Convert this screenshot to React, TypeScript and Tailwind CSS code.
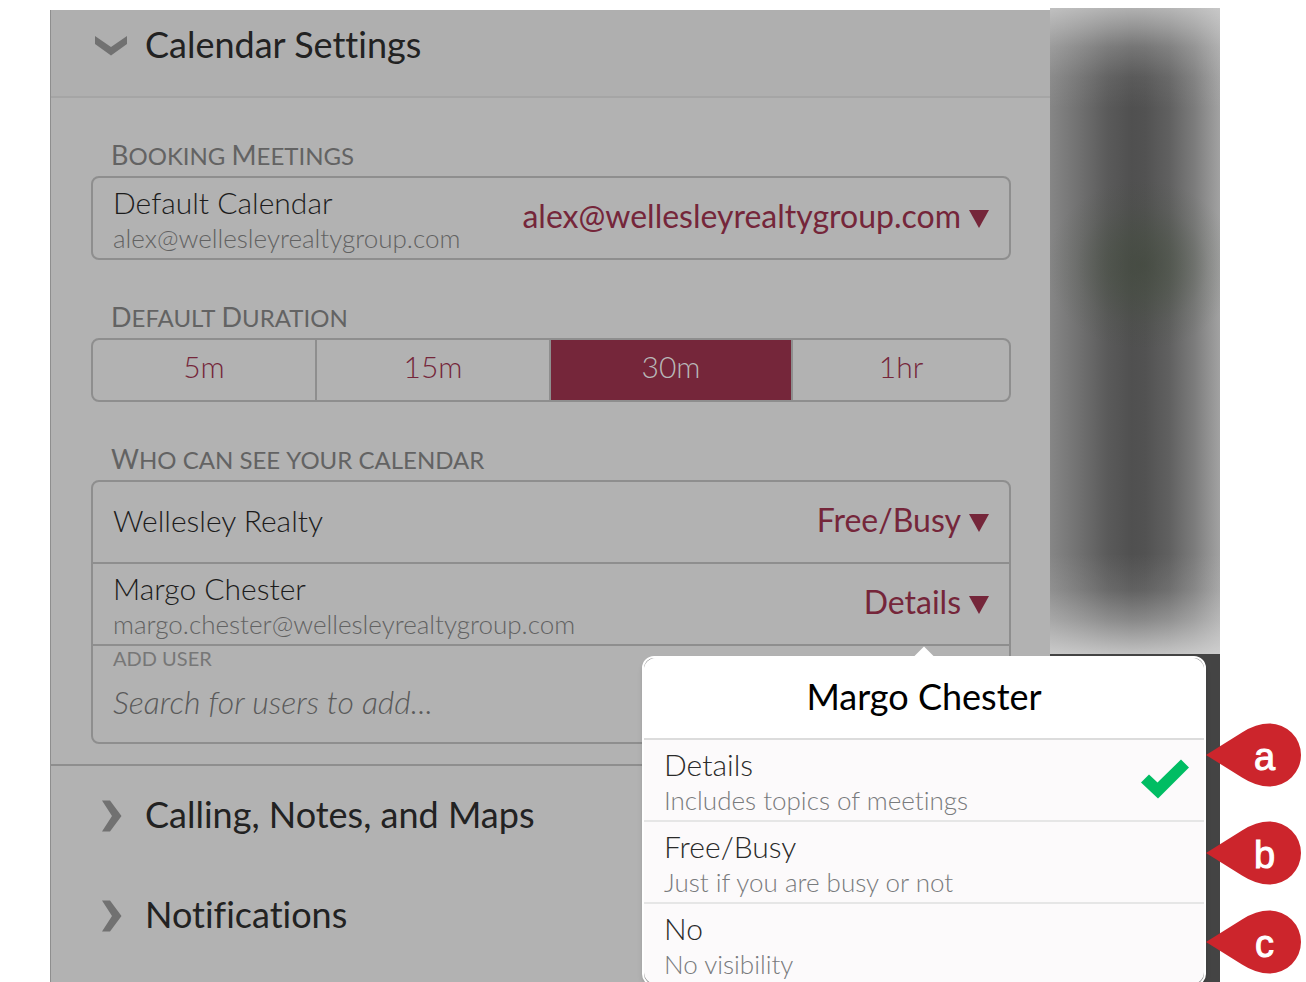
import { useState } from 'react';

const durations = ['5m', '15m', '30m', '1hr'];

const visibilityOptions = [
  { name: 'Details', note: 'Includes topics of meetings' },
  { name: 'Free/Busy', note: 'Just if you are busy or not' },
  { name: 'No', note: 'No visibility' },
];

const visibilityNames = visibilityOptions.map((option) => option.name);

const calendars = ['alex@wellesleyrealtygroup.com'];

const markers = [
  { letter: 'a', place: 'top-[65px]' },
  { letter: 'b', place: 'top-[163px]' },
  { letter: 'c', place: 'top-[252px]' },
];

function ChevronDown() {
  return (
    <svg viewBox="0 0 32 20" className="mt-0.5 w-8 h-5 shrink-0 fill-[#717171]" aria-hidden="true">
      <path d="M0 0 L16 11 L32 0 V8 L16 19.5 L0 8 Z" />
    </svg>
  );
}

function ChevronRight() {
  return (
    <svg viewBox="0 0 32 32" className="w-8 h-8 shrink-0 fill-[#717171]" aria-hidden="true">
      <path d="M7 0.5 H15 L26.5 16 L15 31.5 H7 L17 16 Z" />
    </svg>
  );
}

type DropdownProps = {
  label: string;
  options: string[];
  value: string;
  onChange: (value: string) => void;
};

function Dropdown({ label, options, value, onChange }: DropdownProps) {
  return (
    <div className="flex items-center gap-2 text-[#75263a]">
      <select
        aria-label={label}
        value={value}
        onChange={(e) => onChange(e.target.value)}
        className="appearance-none [field-sizing:content] bg-transparent pb-1 text-[32px] leading-10 cursor-pointer outline-none"
      >
        {options.map((option) => (
          <option key={option}>{option}</option>
        ))}
      </select>
      <svg viewBox="0 0 20 18" className="mt-0.5 w-5 h-[18px] fill-current pointer-events-none" aria-hidden="true">
        <path d="M0 0 H20 L10 18 Z" />
      </svg>
    </div>
  );
}

// All caps, with a taller first letter on the words that are capitalised
function SectionLabel({ text }: { text: string }) {
  return (
    <h3 className="px-5 text-[24px] leading-9 text-[#636363]">
      {text.split(' ').map((word) => (
        <span key={word}>
          <span
            className={
              /^[A-Z]/.test(word)
                ? 'inline-block uppercase first-letter:text-[27px] first-letter:leading-none'
                : 'inline-block uppercase'
            }
          >
            {word}
          </span>{' '}
        </span>
      ))}
    </h3>
  );
}

function Person({ name, email }: { name: string; email?: string }) {
  return (
    <div className={email ? 'pt-1' : 'pb-1'}>
      <div className="text-[30px] leading-9 font-light text-[#1c1c1c]">{name}</div>
      {email && <div className="text-[26px] leading-9 font-light text-[#626262]">{email}</div>}
    </div>
  );
}

function Marker({ letter }: { letter: string }) {
  return (
    <div className="relative w-[95px] h-16">
      <svg viewBox="0 0 95 64" className="w-full h-full fill-[#cc252c]" aria-hidden="true">
        <path d="M0 32 L36 9.5 Q50 0.5 63.5 0.5 A31.5 31.5 0 0 1 63.5 63.5 Q50 63.5 36 54.5 Z" />
      </svg>
      <span className="absolute inset-0 pl-[22px] pt-1 flex items-center justify-center font-['Liberation_Sans',sans-serif] text-[38px] leading-none text-white [-webkit-text-stroke:1px_white]">
        {letter}
      </span>
    </div>
  );
}

type PopoverProps = {
  title: string;
  value: string;
  onChange: (value: string) => void;
};

function VisibilityPopover({ title, value, onChange }: PopoverProps) {
  return (
    <div
      role="dialog"
      aria-label={title}
      className="absolute z-10 top-full -right-[197px] mt-3 w-[564px] rounded-xl border-2 border-white bg-[#8a8a8a] shadow-md"
    >
      <svg viewBox="0 0 20 10" className="absolute left-[270px] -top-3 w-5 h-[11px] fill-white" aria-hidden="true">
        <path d="M0 10 L10 0 L20 10 Z" />
      </svg>
      <div className="overflow-hidden rounded-xl bg-[#fcfafb]">
        <h2 className="bg-white pt-[18px] pb-[22px] text-center text-[36px] leading-10 text-black">{title}</h2>
        {visibilityOptions.map((option, index) => (
          <label
            key={option.name}
            className={`flex items-center justify-between h-[82px] pl-5 pr-[15px] border-t-2 cursor-pointer ${
              index === 0 ? 'border-[#dcdcdc]' : 'border-[#e6e6e6]'
            }`}
          >
            <input
              type="radio"
              name="visibility"
              className="sr-only"
              checked={value === option.name}
              onChange={() => onChange(option.name)}
            />
            <span className="pt-1 font-light">
              <span className="block text-[30px] leading-9 text-[#2a2a2a]">{option.name}</span>
              <span className="block text-[26px] leading-9 text-[#797b7d]">{option.note}</span>
            </span>
            {value === option.name && (
              <svg viewBox="0 0 48 40" className="mb-0.5 w-12 h-10 fill-[#00bd63]" aria-hidden="true">
                <path d="M0 23.5 L8 15.5 L16.5 23.5 L40 0.5 L48 8.5 L17 39.5 Z" />
              </svg>
            )}
          </label>
        ))}
      </div>
      {markers.map((marker) => (
        <div key={marker.letter} className={`absolute left-full ml-0.5 ${marker.place}`}>
          <Marker letter={marker.letter} />
        </div>
      ))}
    </div>
  );
}

export default function App() {
  const [calendar, setCalendar] = useState(calendars[0]);
  const [duration, setDuration] = useState('30m');
  const [companyAccess, setCompanyAccess] = useState('Free/Busy');
  const [margoAccess, setMargoAccess] = useState('Details');

  return (
    <div className="flex h-screen overflow-hidden bg-white pt-2 pl-[50px] pr-[86px] font-[Lato,sans-serif] [font-variant-ligatures:none]">
      <main className="flex-1 mt-0.5 border-l border-[#8e8e8e] bg-[#b2b2b2]">
        <h2 className="border-b-2 border-[#a5a5a5] bg-[#afafaf]">
          <button type="button" aria-expanded="true" className="flex w-full h-[86px] items-center gap-[18px] pl-11 pb-4 text-[36px] text-[#222]">
            <ChevronDown />
            <span className="pb-0.5">Calendar Settings</span>
          </button>
        </h2>

        <div className="border-b-2 border-[#8e8e8e] pl-10 pr-[39px] pt-10 pb-5">
          <section>
            <SectionLabel text="Booking Meetings" />
            <div className="mt-0.5 flex h-[84px] items-center justify-between rounded-lg border-2 border-[#8e8e8e] px-5">
              <Person name="Default Calendar" email="alex@wellesleyrealtygroup.com" />
              <Dropdown label="Default Calendar" options={calendars} value={calendar} onChange={setCalendar} />
            </div>
          </section>

          <section className="mt-10">
            <SectionLabel text="Default Duration" />
            <div
              role="radiogroup"
              aria-label="Default Duration"
              className="mt-0.5 grid h-16 grid-cols-[224fr_234fr_242fr_216fr] divide-x-2 divide-[#8e8e8e] overflow-hidden rounded-lg border-2 border-[#8e8e8e]"
            >
              {durations.map((item) => (
                <label
                  key={item}
                  className={`relative flex items-center justify-center pb-2 text-[30px] font-light cursor-pointer ${
                    duration === item ? 'bg-[#75263a] text-[#b8b8b8]' : 'text-[#75263a]'
                  }`}
                >
                  <input
                    type="radio"
                    name="duration"
                    className="sr-only"
                    checked={duration === item}
                    onChange={() => setDuration(item)}
                  />
                  {item}
                </label>
              ))}
            </div>
          </section>

          <section className="mt-10">
            <SectionLabel text="Who can see your calendar" />
            <div className="mt-0.5 divide-y-2 divide-[#8e8e8e] rounded-lg border-2 border-[#8e8e8e]">
              <div className="flex h-[82px] items-center justify-between px-5">
                <Person name="Wellesley Realty" />
                <Dropdown
                  label="Wellesley Realty"
                  options={visibilityNames}
                  value={companyAccess}
                  onChange={setCompanyAccess}
                />
              </div>
              <div className="relative flex h-[82px] items-center justify-between px-5">
                <Person name="Margo Chester" email="margo.chester@wellesleyrealtygroup.com" />
                <Dropdown
                  label="Margo Chester"
                  options={visibilityNames}
                  value={margoAccess}
                  onChange={setMargoAccess}
                />
                <VisibilityPopover title="Margo Chester" value={margoAccess} onChange={setMargoAccess} />
              </div>
              <div className="h-24 px-5">
                <label htmlFor="add-user" className="block text-xl leading-6 uppercase text-[#777]">
                  Add user
                </label>
                <input
                  id="add-user"
                  type="text"
                  placeholder="Search for users to add..."
                  className="mt-3 w-full bg-transparent text-[32px] leading-10 font-light italic text-[#222] placeholder:text-[#5a5a5a] outline-none"
                />
              </div>
            </div>
          </section>
        </div>

        {['Calling, Notes, and Maps', 'Notifications'].map((title) => (
          <h2 key={title}>
            <button type="button" aria-expanded="false" className="flex w-full h-[100px] items-center gap-[18px] pl-11 text-[36px] text-[#222]">
              <ChevronRight />
              <span className="pb-1">{title}</span>
            </button>
          </h2>
        ))}
      </main>

      <aside className="flex w-[170px] shrink-0 flex-col bg-[#444]">
        <div className="relative h-[646px] bg-[linear-gradient(90deg,#868686,#7a7a7a_10%,#6a6a6a_22%,#5a5a5a_34%,#505050_48%,#525252_56%,#606060_70%,#7c7c7c_85%,#a2a2a2)]">
          <div className="absolute inset-0 bg-[radial-gradient(95px_85px_at_92px_257px,rgba(62,72,56,0.55),rgba(62,75,55,0.35)_35%,rgba(62,75,55,0.1)_70%,rgba(62,75,55,0))]" />
          <div className="absolute inset-0 bg-[linear-gradient(180deg,rgba(214,214,214,0.72),rgba(214,214,214,0.5)_20px,rgba(214,214,214,0.28)_39px,rgba(214,214,214,0.08)_69px,rgba(214,214,214,0)_100px)]" />
          <div className="absolute inset-0 bg-[linear-gradient(0deg,rgba(214,214,214,0.85),rgba(214,214,214,0.42)_34px,rgba(214,214,214,0.13)_64px,rgba(214,214,214,0)_100px)]" />
        </div>
      </aside>
    </div>
  );
}
